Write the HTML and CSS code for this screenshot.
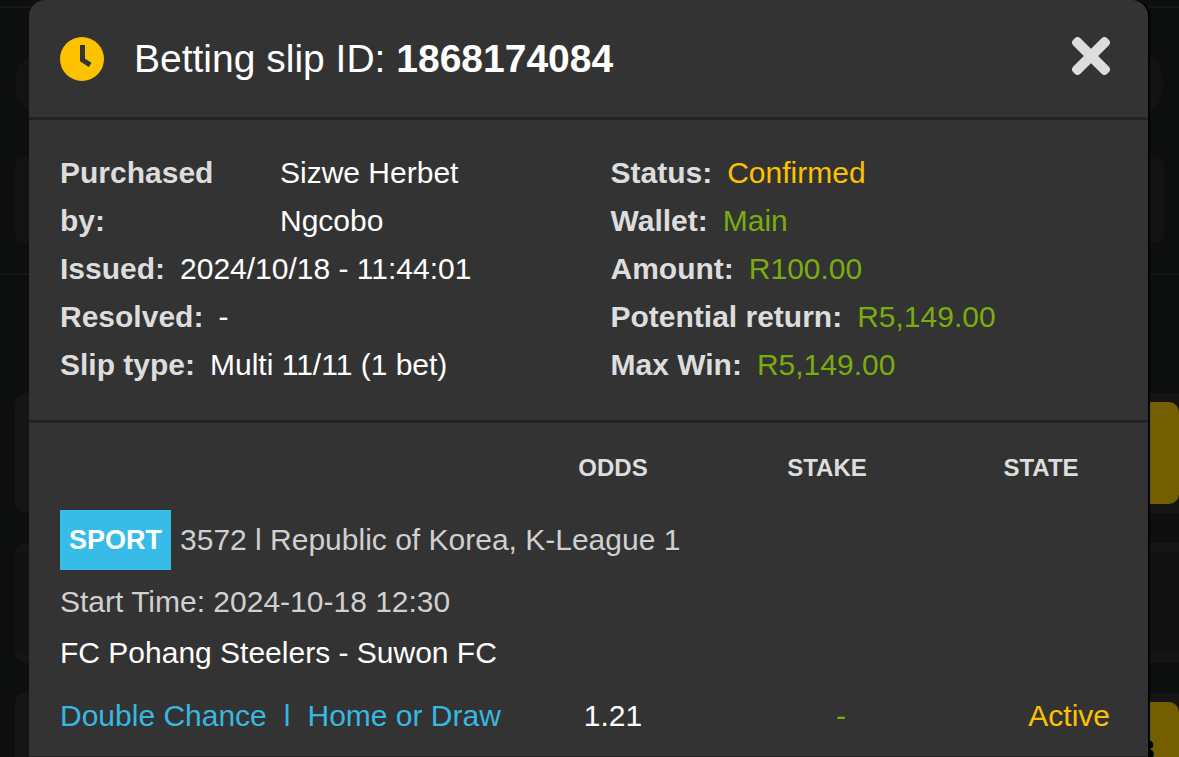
FILE: index.html
```html
<!doctype html>
<html lang="en">
<head>
    <meta charset="UTF-8">
    <title>Betting slip 1868174084</title>
    <link rel="stylesheet" href="styles.css">
</head>
<body>
    <!-- dimmed page behind the slip -->
    <div class="page" aria-hidden="true">
        <div class="page-top">
            <div class="page-search"></div>
            <div class="page-panel"></div>
        </div>
        <div class="page-list">
            <div class="page-card"><div class="page-action"></div></div>
            <div class="page-card page-card-plain"></div>
            <div class="page-card"><div class="page-action">3</div></div>
        </div>
    </div>

    <main class="slip">
        <header class="slip-header">
            <svg class="clock" viewBox="0 0 44 44" aria-hidden="true">
                <circle cx="22" cy="22" r="22" fill="#fcc200"/>
                <path d="M22.5 10.5V23L28 26.5" fill="none" stroke="#333" stroke-width="5" stroke-linecap="square"/>
            </svg>
            <h1>Betting slip ID: <strong>1868174084</strong></h1>
            <button class="close" type="button" aria-label="Close">
                <svg viewBox="0 0 38 38">
                    <g fill="#ddd" transform="rotate(45 19 19)">
                        <rect x="-5" y="14" width="48" height="10" rx="4"/>
                        <rect x="14" y="-5" width="10" height="48" rx="4"/>
                    </g>
                </svg>
            </button>
        </header>

        <section class="details">
            <dl>
                <div class="wide"><dt>Purchased by:</dt><dd>Sizwe Herbet Ngcobo</dd></div>
                <div><dt>Issued:</dt><dd>2024/10/18 - 11:44:01</dd></div>
                <div><dt>Resolved:</dt><dd>-</dd></div>
                <div><dt>Slip type:</dt><dd>Multi 11/11 (1 bet)</dd></div>
            </dl>
            <dl>
                <div><dt>Status:</dt><dd class="yellow">Confirmed</dd></div>
                <div><dt>Wallet:</dt><dd class="green">Main</dd></div>
                <div><dt>Amount:</dt><dd class="green">R100.00</dd></div>
                <div><dt>Potential return:</dt><dd class="green">R5,149.00</dd></div>
                <div><dt>Max Win:</dt><dd class="green">R5,149.00</dd></div>
            </dl>
        </section>

        <table class="bets">
            <thead>
                <tr>
                    <th class="col-bet"></th>
                    <th>ODDS</th>
                    <th>STAKE</th>
                    <th>STATE</th>
                </tr>
            </thead>
            <tbody>
                <tr>
                    <td colspan="4">
                        <div class="league"><span class="badge">SPORT</span>3572 l Republic of Korea, K-League 1</div>
                        <div class="start">Start Time: 2024-10-18 12:30</div>
                        <div class="teams">FC Pohang Steelers - Suwon FC</div>
                    </td>
                </tr>
                <tr class="pick">
                    <td class="market"><span>Double Chance</span><span>l</span><span>Home or Draw</span></td>
                    <td class="odds">1.21</td>
                    <td class="stake green">-</td>
                    <td class="state yellow">Active</td>
                </tr>
            </tbody>
        </table>
    </main>
</body>
</html>
```
FILE: styles.css
```css
* {
    box-sizing: border-box;
}
body {
    margin: 0;
    height: 100vh;
    overflow: hidden;
    background: #0d0e0e;
    color: #fff;
    font-family: "Liberation Sans", Arial, sans-serif;
    font-size: 30px;
    line-height: 48px;
}
h1, dl, dd {
    margin: 0;
}

/* page behind */
.page {
    position: absolute;
    inset: 0;
    overflow: hidden;
}
.page-top {
    margin-top: 6px;
    padding: 40px 15px 30px;
    border-top: 2px solid #161717;
    border-bottom: 2px solid #161717;
}
.page-search {
    height: 70px;
    border-radius: 35px;
    background: #131313;
}
.page-panel {
    height: 87px;
    margin-top: 38px;
    border-radius: 8px;
    background: #131313;
}
.page-list {
    display: flex;
    flex-direction: column;
    gap: 30px;
    padding: 118px 0 0 15px;
}
.page-card {
    display: flex;
    justify-content: flex-end;
    align-items: center;
    height: 120px;
    border-radius: 10px 0 0 10px;
    background: #151515;
}
.page-card-plain {
    background: #121212;
    border: solid #151515;
    border-width: 9px 0;
}
.page-action {
    width: 160px;
    height: 102px;
    padding: 24px 0 0 119px;
    border-radius: 10px;
    background: #735f00;
    color: #000;
    font-weight: bold;
}

/* slip */
.slip {
    position: relative;
    min-height: 100vh;
    margin: 0 31px 0 29px;
    border-radius: 16px 16px 0 0;
    background: #333;
    box-shadow: 2px 0 1px #000;
}
.slip-header {
    display: flex;
    align-items: center;
    height: 120px;
    padding: 0 38px 0 31px;
    border-bottom: 3px solid #232323;
}
.clock {
    width: 44px;
    height: 44px;
    margin-right: 30px;
}
h1 {
    flex: 1;
    font-size: 39px;
    font-weight: normal;
}
.close {
    width: 38px;
    height: 38px;
    margin-bottom: 6px;
    padding: 0;
    border: none;
    background: none;
    cursor: pointer;
}
.close svg {
    display: block;
}
.details {
    display: grid;
    grid-template-columns: 1fr 1fr;
    gap: 44px;
    padding: 29px 31px 31px;
    border-bottom: 3px solid #232323;
}
.details dl div {
    display: flex;
    gap: 15px;
}
.details dl .wide {
    display: grid;
    grid-template-columns: 200px 220px;
    gap: 20px;
}
dt {
    color: #ddd;
    font-weight: bold;
}
.yellow {
    color: #fcc200;
}
.green {
    color: #7aac10;
}

/* bets */
.bets {
    width: 100%;
    table-layout: fixed;
    border-collapse: collapse;
    border-bottom: 3px solid #232323;
}
th, td {
    padding: 0;
}
th {
    width: 214px;
    padding: 31px 0 28px;
    color: #ddd;
    font-size: 24px;
    line-height: 28px;
}
.bets .col-bet {
    width: auto;
}
.bets td:first-child {
    padding-left: 31px;
}
.league {
    display: flex;
    align-items: center;
    gap: 9px;
    color: #d0d0d0;
}
.badge {
    padding: 0 9px;
    background: #37bce8;
    color: #fff;
    font-size: 27px;
    font-weight: bold;
    line-height: 60px;
}
.start, .teams {
    line-height: 51px;
}
.start {
    margin-top: 6px;
    color: #d0d0d0;
}
.pick td {
    padding-top: 14px;
    padding-bottom: 16px;
}
.market {
    color: #37b8e0;
    white-space: nowrap;
}
.market span + span {
    margin-left: 17px;
}
.odds {
    text-align: center;
}
.pick .stake {
    padding-left: 28px;
    text-align: center;
}
.pick .state {
    padding-right: 38px;
    text-align: right;
}
```
